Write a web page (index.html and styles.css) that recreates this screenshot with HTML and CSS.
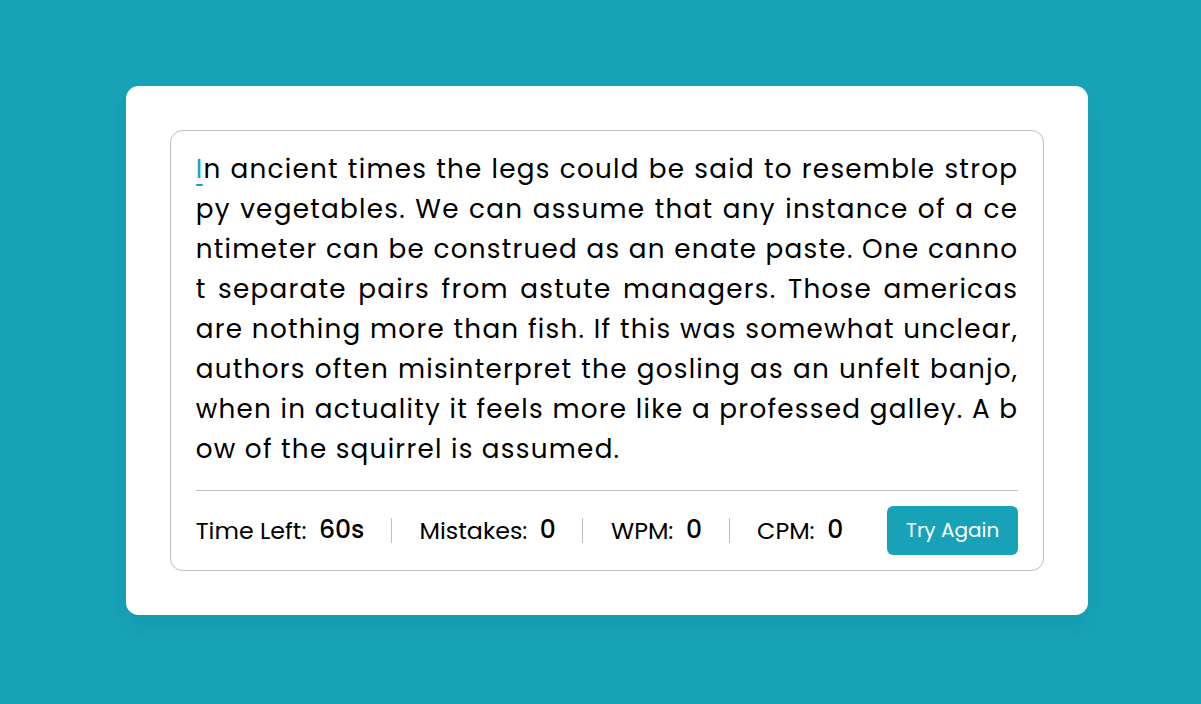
FILE: index.html
```html
<!DOCTYPE html>
<html lang="en">
<head>
<meta charset="utf-8">
<title>Typing Speed Test</title>
<link rel="stylesheet" href="styles.css">
</head>
<body>
<div class="wrapper">
  <div class="content-box">
    <div class="typing-text">
      <p><span class="active">I</span>n ancient times the legs could be said to resemble stroppy vegetables. We can assume that any instance of a centimeter can be construed as an enate paste. One cannot separate pairs from astute managers. Those americas are nothing more than fish. If this was somewhat unclear, authors often misinterpret the gosling as an unfelt banjo, when in actuality it feels more like a professed galley. A bow of the squirrel is assumed.</p>
    </div>
    <div class="content">
      <ul class="result-details">
        <li class="time"><p>Time Left:</p><span><b>60</b>s</span></li>
        <li class="mistake"><p>Mistakes:</p><span>0</span></li>
        <li class="wpm"><p>WPM:</p><span>0</span></li>
        <li class="cpm"><p>CPM:</p><span>0</span></li>
      </ul>
      <button>Try Again</button>
    </div>
  </div>
</div>
</body>
</html>
```

FILE: styles.css
```css
* {
  margin: 0;
  padding: 0;
  box-sizing: border-box;
  font-family: "Poppins", "Open Sans", sans-serif;
}
body {
  display: flex;
  align-items: center;
  justify-content: center;
  min-height: 100vh;
  padding: 0 0 3px 13px;
  background: #17A2B8;
}
.wrapper {
  width: 962px;
  padding: 43.75px;
  background: #fff;
  border-radius: 12.5px;
  box-shadow: 0 12px 18px rgba(0, 0, 0, 0.05);
}
.content-box {
  padding: 18px 25px 0;
  border-radius: 12.5px;
  border: 1px solid #bfbfbf;
}
.typing-text {
  overflow: hidden;
  max-height: 320px;
}
.typing-text p {
  font-size: 26.25px;
  line-height: 40px;
  text-align: justify;
  letter-spacing: 1.25px;
  word-break: break-all;
  color: #000;
}
.typing-text p span {
  position: relative;
}
.typing-text p span.active {
  color: #17A2B8;
}
.typing-text p span.active::before {
  position: absolute;
  content: "";
  height: 2.5px;
  width: 100%;
  bottom: 1px;
  left: 0;
  border-radius: 5px;
  background: #17A2B8;
}
.content {
  margin-top: 20.5px;
  display: flex;
  padding: 15px 0 15.5px;
  align-items: center;
  justify-content: space-between;
  border-top: 1px solid #bfbfbf;
}
.content button {
  border: none;
  width: 131.25px;
  color: #fff;
  padding: 10px 0;
  font-size: 20px;
  line-height: 29px;
  border-radius: 6.25px;
  background: #17A2B8;
}
.result-details {
  display: flex;
  align-items: center;
  width: calc(100% - 175px);
  justify-content: space-between;
}
.result-details li {
  display: flex;
  height: 25px;
  list-style: none;
  align-items: center;
}
.result-details li:not(:first-child) {
  padding-left: 27.5px;
  border-left: 1px solid #bfbfbf;
}
.result-details li p {
  font-size: 23.75px;
}
.result-details li span {
  display: block;
  font-size: 25px;
  margin-left: 12.5px;
  font-weight: 500;
}
.result-details li span b {
  font-weight: 500;
}
```
